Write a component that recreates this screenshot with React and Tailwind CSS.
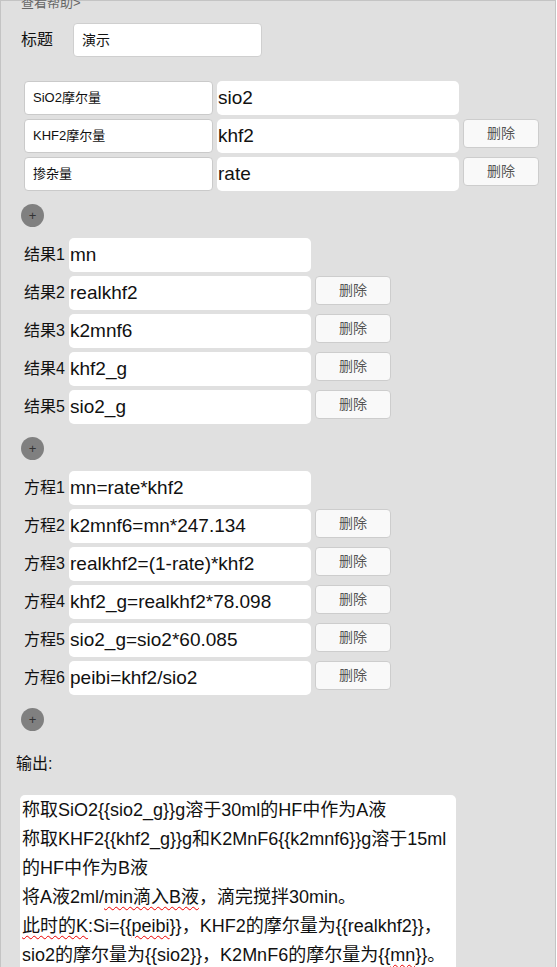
import React from "react";

const font = { fontFamily: "'Liberation Sans', 'Noto Sans CJK SC', sans-serif" };

function DelBtn() {
  return (
    <div className="w-[76px] h-[29px] shrink-0 rounded-[4px] border border-[#cdcdcd] bg-[#f9f9f9] text-[14px] text-[#555] flex items-center justify-center">
      删除
    </div>
  );
}

function ValueBox({ text, w = "w-[242px]" }) {
  return (
    <div className={`${w} h-[34px] shrink-0 rounded-[5px] bg-white text-[19px] text-[#111] flex items-center pl-[1px] pt-[1px]`}>
      {text}
    </div>
  );
}

function Plus() {
  return (
    <div className="w-[23px] h-[23px] rounded-full bg-[#808080] flex items-center justify-center text-[#333] text-[13px] leading-none">
      +
    </div>
  );
}

function LabeledRow({ label, value, del }) {
  return (
    <div className="flex items-start">
      <div className="w-[45px] h-[34px] flex items-center text-[16px] text-[#111]">{label}</div>
      <ValueBox text={value} />
      {del && <div className="ml-[4px]"><DelBtn /></div>}
    </div>
  );
}

export default function App() {
  const vars = [
    ["SiO2摩尔量", "sio2", false],
    ["KHF2摩尔量", "khf2", true],
    ["掺杂量", "rate", true],
  ];
  const results = ["mn", "realkhf2", "k2mnf6", "khf2_g", "sio2_g"];
  const eqs = [
    "mn=rate*khf2",
    "k2mnf6=mn*247.134",
    "realkhf2=(1-rate)*khf2",
    "khf2_g=realkhf2*78.098",
    "sio2_g=sio2*60.085",
    "peibi=khf2/sio2",
  ];
  const wavy = "underline decoration-wavy decoration-[#e00] decoration-1 underline-offset-[3px]";
  return (
    <div className="w-[557px] h-[967px] overflow-hidden bg-white" style={font}>
      <div className="w-[556px] min-h-[967px] bg-[#e0e0e0] border-l border-t border-r border-[#c4c4c4]">
        <div className="ml-[20px] mt-[-7px] h-[18px] leading-[18px] text-[13px] text-[#666]">查看帮助&gt;</div>

        <div className="flex items-center mt-[11px] ml-[20px]">
          <div className="text-[16px] text-[#111] w-[52px]">标题</div>
          <div className="w-[189px] h-[34px] rounded-[4px] border border-[#cfcfcf] bg-white text-[14px] text-[#111] flex items-center pl-[8px]">
            演示
          </div>
        </div>

        <div className="mt-[24px] ml-[23px] flex flex-col gap-[4px]">
          {vars.map(([a, b, d]) => (
            <div key={a} className="flex items-start gap-[4px]">
              <div className="w-[189px] h-[34px] shrink-0 rounded-[4px] border border-[#cacaca] bg-white text-[13px] text-[#111] flex items-center pl-[8px]">
                {a}
              </div>
              <ValueBox text={b} />
              {d && <DelBtn />}
            </div>
          ))}
        </div>

        <div className="mt-[13px] ml-[20px]"><Plus /></div>

        <div className="mt-[11px] ml-[23px] flex flex-col gap-[4px]">
          {results.map((r, i) => (
            <LabeledRow key={r} label={`结果${i + 1}`} value={r} del={i > 0} />
          ))}
        </div>

        <div className="mt-[13px] ml-[20px]"><Plus /></div>

        <div className="mt-[11px] ml-[23px] flex flex-col gap-[4px]">
          {eqs.map((r, i) => (
            <LabeledRow key={r} label={`方程${i + 1}`} value={r} del={i > 0} />
          ))}
        </div>

        <div className="mt-[13px] ml-[20px]"><Plus /></div>

        <div className="mt-[21px] ml-[15px] text-[16px] text-[#111]">输出:</div>

        <div className="mt-[19px] ml-[19px] w-[436px] h-[200px] rounded-[5px] bg-white pt-[1px] pl-[2px] pr-[6px] text-[18px] leading-[29px] text-[#111]">
          <div>称取SiO2{"{{sio2_g}}"}g溶于30ml的HF中作为A液</div>
          <div>称取KHF2{"{{khf2_g}}"}g和K2MnF6{"{{k2mnf6}}"}g溶于15ml的HF中作为B液</div>
          <div>
            将A液2ml/<span className={wavy}>min滴入B液</span>，滴完搅拌30min。
          </div>
          <div>
            <span className={wavy}>此时的K</span>:Si={"{{"}<span className={wavy}>peibi</span>{"}}"}，KHF2的摩尔量为{"{{realkhf2}}"}，sio2的摩尔量为{"{{sio2}}"}，K2MnF6的摩尔量为{"{{"}<span className={wavy}>mn</span>{"}}"}。
          </div>
        </div>
      </div>
    </div>
  );
}
